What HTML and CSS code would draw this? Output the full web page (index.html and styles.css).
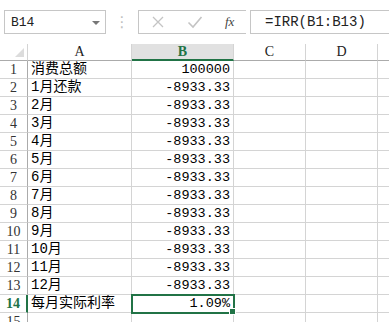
FILE: index.html
```html
<!DOCTYPE html>
<html lang="zh">
<head>
  <meta charset="UTF-8" />
  <title>IRR</title>
  <link rel="stylesheet" href="styles.css">
</head>
<body>
  <div class="formulaBar">
    <div class="nameBox">
      <span>B14</span>
      <span class="arrow"></span>
    </div>
    <div class="dots">⋮</div>
    <div class="btnBox">
      <svg class="ico" width="14" height="14" viewBox="0 0 14 14"><path d="M2 2 L12 12 M12 2 L2 12" stroke="#c4c4c4" stroke-width="1.3" fill="none"/></svg>
      <svg class="ico" width="16" height="14" viewBox="0 0 16 14"><path d="M1.5 7.5 L6 12 L14.5 2" stroke="#c4c4c4" stroke-width="1.6" fill="none"/></svg>
      <span class="fx">fx</span>
    </div>
    <div class="formula">=IRR(B1:B13)</div>
  </div>

  <div class="sheet">
    <div class="hd corner"><span class="tri"></span></div>
    <div class="hd">A</div>
    <div class="hd sel">B</div>
    <div class="hd">C</div>
    <div class="hd">D</div>
    <div class="hd last"></div>

    <div class="rn">1</div><div class="c">消费总额</div><div class="c num">100000</div><div class="c"></div><div class="c"></div><div class="c last"></div>
    <div class="rn">2</div><div class="c">1月还款</div><div class="c num">-8933.33</div><div class="c"></div><div class="c"></div><div class="c last"></div>
    <div class="rn">3</div><div class="c">2月</div><div class="c num">-8933.33</div><div class="c"></div><div class="c"></div><div class="c last"></div>
    <div class="rn">4</div><div class="c">3月</div><div class="c num">-8933.33</div><div class="c"></div><div class="c"></div><div class="c last"></div>
    <div class="rn">5</div><div class="c">4月</div><div class="c num">-8933.33</div><div class="c"></div><div class="c"></div><div class="c last"></div>
    <div class="rn">6</div><div class="c">5月</div><div class="c num">-8933.33</div><div class="c"></div><div class="c"></div><div class="c last"></div>
    <div class="rn">7</div><div class="c">6月</div><div class="c num">-8933.33</div><div class="c"></div><div class="c"></div><div class="c last"></div>
    <div class="rn">8</div><div class="c">7月</div><div class="c num">-8933.33</div><div class="c"></div><div class="c"></div><div class="c last"></div>
    <div class="rn">9</div><div class="c">8月</div><div class="c num">-8933.33</div><div class="c"></div><div class="c"></div><div class="c last"></div>
    <div class="rn">10</div><div class="c">9月</div><div class="c num">-8933.33</div><div class="c"></div><div class="c"></div><div class="c last"></div>
    <div class="rn">11</div><div class="c">10月</div><div class="c num">-8933.33</div><div class="c"></div><div class="c"></div><div class="c last"></div>
    <div class="rn">12</div><div class="c">11月</div><div class="c num">-8933.33</div><div class="c"></div><div class="c"></div><div class="c last"></div>
    <div class="rn">13</div><div class="c">12月</div><div class="c num">-8933.33</div><div class="c"></div><div class="c"></div><div class="c last"></div>
    <div class="rn active">14</div><div class="c">每月实际利率</div><div class="c num current">1.09%<span class="handle"></span></div><div class="c"></div><div class="c"></div><div class="c last"></div>
    <div class="rn">15</div><div class="c"></div><div class="c"></div><div class="c"></div><div class="c"></div><div class="c last"></div>
  </div>
</body>
</html>
```

FILE: styles.css
```css
* { box-sizing: border-box; margin: 0; padding: 0; }
body { width: 389px; height: 322px; overflow: hidden; background: #fff; font-family: "Liberation Mono", "Noto Sans CJK SC", monospace; color: #000; }

.formulaBar { display: flex; align-items: center; height: 44px; padding: 0 0 0 4px; }
.nameBox { width: 102px; height: 24px; border: 1px solid #c6c6c6; display: flex; align-items: center; justify-content: space-between; padding: 0 5px 0 6px; font-size: 13px; color: #222; }
.arrow { width: 0; height: 0; border-left: 4px solid transparent; border-right: 4px solid transparent; border-top: 4px solid #777; margin-top: 1px; }
.dots { width: 32px; text-align: center; color: #c0c0c0; font-size: 15px; font-family: "DejaVu Sans", sans-serif; }
.btnBox { width: 108px; height: 24px; border: 1px solid #c6c6c6; border-right: none; display: flex; align-items: center; padding-left: 12px; gap: 22px; }
.fx { font-family: "Liberation Serif", serif; font-style: italic; font-size: 13px; color: #444; margin-left: 0; }
.formula { flex: 1; height: 24px; border: 1px solid #c6c6c6; border-right: none; margin-left: 4px; padding-left: 14px; font-size: 14px; line-height: 22px; color: #222; }

.sheet { display: grid; grid-template-columns: 28px 104px 102px 72px 72px 11px; grid-template-rows: 17px repeat(15, 18px); }
.hd { border-right: 1px solid #d4d4d4; border-bottom: 1px solid #ababab; text-align: center; font-size: 14px; line-height: 16px; color: #222; font-family: "Liberation Serif", "Noto Sans CJK SC", serif; }
.hd.sel { background: #e1e1e1; border-bottom: 2px solid #217346; color: #217346; font-weight: bold; line-height: 15px; }
.hd.last, .c.last { border-right: none; }
.corner { position: relative; }
.tri { position: absolute; right: 3px; bottom: 3px; width: 0; height: 0; border-left: 9px solid transparent; border-bottom: 9px solid #dcdcdc; }

.rn { border-right: 1px solid #ababab; border-bottom: 1px solid #d4d4d4; text-align: center; font-size: 14px; line-height: 17px; color: #333; font-family: "Liberation Serif", serif; }
.rn.active { color: #217346; font-weight: bold; border-right: 2px solid #217346; }
.c { border-right: 1px solid #d4d4d4; border-bottom: 1px solid #d4d4d4; font-size: 14px; line-height: 17px; padding: 0 3px; white-space: nowrap; overflow: visible; }
.num { text-align: right; font-size: 13.5px; }
.current { position: relative; outline: 2px solid #217346; outline-offset: -1px; z-index: 1; }
.handle { position: absolute; right: -3px; bottom: -3px; width: 5px; height: 5px; background: #217346; border: 1px solid #fff; box-sizing: content-box; }
```
